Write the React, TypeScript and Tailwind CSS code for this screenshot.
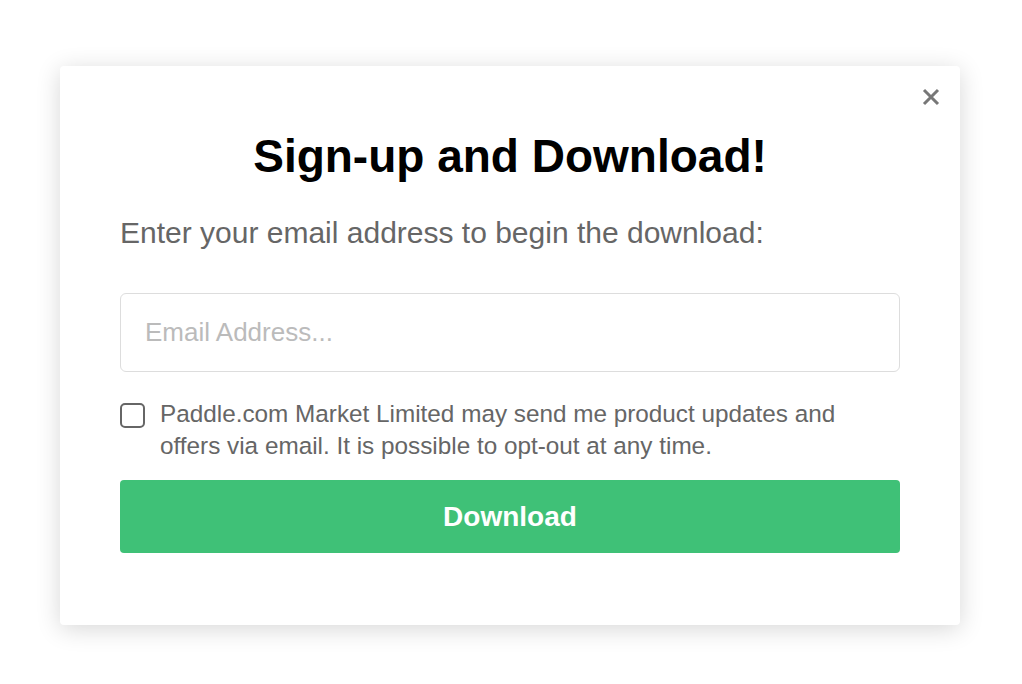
import React from 'react';

export default function App() {
  return (
    <div className="min-h-screen bg-white pl-[60px] pt-[66px] font-['Liberation_Sans',Arial,sans-serif]">
      <div className="relative w-[900px] h-[559px] bg-white rounded-[4px] shadow-[0_4px_24px_rgba(0,0,0,0.16)] px-[60px] pt-[64px]">
        <button className="absolute right-[19px] top-[21px] w-[20px] h-[20px] flex items-center justify-center text-[#777]">
          <svg viewBox="0 0 20 20" className="w-[20px] h-[20px]">
            <path d="M3 3 L17 17 M17 3 L3 17" stroke="currentColor" strokeWidth="3" />
          </svg>
        </button>
        <h1 className="text-center text-[46px] leading-[52px] font-bold text-black">Sign-up and Download!</h1>
        <p className="mt-[33px] text-[30px] leading-[36px] text-[#666]">
          Enter your email address to begin the download:
        </p>
        <input
          type="text"
          placeholder="Email Address..."
          className="mt-[42px] w-full h-[79px] border border-[#ddd] rounded-[6px] px-[24px] text-[26px] text-[#333] placeholder:text-[#bbb] outline-none"
        />
        <label className="mt-[26px] flex items-start gap-[15px] pr-[30px]">
          <span className="mt-[5px] w-[25px] h-[25px] shrink-0 rounded-[5px] border-2 border-[#666]" />
          <span className="text-[24.3px] leading-[32px] text-[#666]">
            Paddle.com Market Limited may send me product updates and offers via email. It is possible to opt-out at any time.
          </span>
        </label>
        <button className="mt-[18px] w-full h-[73px] rounded-[4px] bg-[#3fc177] text-white text-[28px] font-bold">
          Download
        </button>
      </div>
    </div>
  );
}
